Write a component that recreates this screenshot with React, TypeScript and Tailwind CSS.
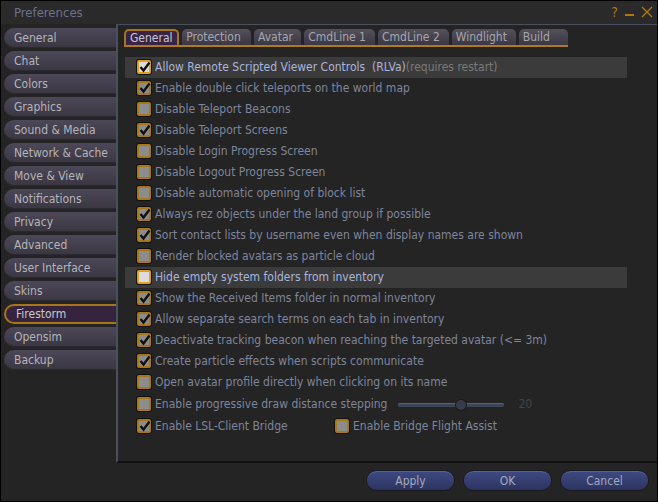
import React from "react";

const font = { fontFamily: '"DejaVu Sans Condensed", "DejaVu Sans", sans-serif' };

const sideTabs = [
        "General",
        "Chat",
        "Colors",
        "Graphics",
        "Sound & Media",
        "Network & Cache",
        "Move & View",
        "Notifications",
        "Privacy",
        "Advanced",
        "User Interface",
        "Skins",
        "Firestorm",
        "Opensim",
        "Backup",
];

const topTabs = [
        { label: "General", w: "w-[56px]" },
        { label: "Protection", w: "w-[70px]" },
        { label: "Avatar", w: "w-[48px]" },
        { label: "CmdLine 1", w: "w-[72px]" },
        { label: "CmdLine 2", w: "w-[72px]" },
        { label: "Windlight", w: "w-[65px]" },
        { label: "Build", w: "w-[50px]" },
];

type Opt = { label: string; checked: boolean; hl?: boolean };

const options: Opt[] = [
        { label: "Allow Remote Scripted Viewer Controls  (RLVa)", checked: true, hl: true },
        { label: "Enable double click teleports on the world map", checked: true },
        { label: "Disable Teleport Beacons", checked: false },
        { label: "Disable Teleport Screens", checked: true },
        { label: "Disable Login Progress Screen", checked: false },
        { label: "Disable Logout Progress Screen", checked: false },
        { label: "Disable automatic opening of block list", checked: false },
        { label: "Always rez objects under the land group if possible", checked: true },
        { label: "Sort contact lists by username even when display names are shown", checked: true },
        { label: "Render blocked avatars as particle cloud", checked: false },
        { label: "Hide empty system folders from inventory", checked: false, hl: true },
        { label: "Show the Received Items folder in normal inventory", checked: true },
        { label: "Allow separate search terms on each tab in inventory", checked: true },
        { label: "Deactivate tracking beacon when reaching the targeted avatar (<= 3m)", checked: true },
        { label: "Create particle effects when scripts communicate", checked: true },
        { label: "Open avatar profile directly when clicking on its name", checked: false },
];

const Check = ({ checked, hl }: { checked: boolean; hl?: boolean }) => (
        <span
                className={`relative flex h-[14px] w-[14px] shrink-0 items-center justify-center rounded-[2px] border-2 ${
                        hl ? "border-[#e0a020] bg-[#dcdcdc]" : "border-[#a87818] bg-[#8c8c8c]"
                } shadow-[0_0_0_1px_#111]`}
        >
                {checked && (
                        <svg width="12" height="12" viewBox="0 0 12 12" className="absolute -top-[1px] left-[0px]">
                                <path d="M1.5 6 L4.5 9.5 L10.5 1.5" fill="none" stroke="#111" strokeWidth="2.4" />
                        </svg>
                )}
        </span>
);

const Row = ({ o, h = "h-[21px]" }: { o: Opt; h?: string }) => (
        <div className={`flex ${h} items-center pl-[12px] ${o.hl ? "bg-[#3b3b3b]" : ""}`}>
                <Check checked={o.checked} hl={o.hl} />
                <span
                        className={`ml-[4px] whitespace-pre text-[12px] ${o.hl ? "text-[#aab4dc]" : "text-[#7e859d]"}`}
                >
                        {o.label}
                        {o.hl && o.label.includes("RLVa") && (
                                <span className="text-[#7a7a7a]">(requires restart)</span>
                        )}
                </span>
        </div>
);

export default function App() {
        return (
                <div
                        style={font}
                        className="flex h-[502px] w-[658px] flex-col overflow-hidden border border-black bg-[#242424]"
                >
                        {/* title bar */}
                        <div className="flex h-[23px] items-center bg-[#2a2a2a] pl-[13px] pr-[4px]">
                                <span className="text-[13px] text-[#6a7290]">Preferences</span>
                                <div className="ml-auto flex items-center gap-[7px] text-[14px] text-[#b07812]">
                                        <span>?</span>
                                        <span className="mt-[6px] h-[2px] w-[9px] bg-[#b07812]" />
                                        <svg width="12" height="12" viewBox="0 0 12 12">
                                                <path d="M1 1 L11 11 M11 1 L1 11" stroke="#b07812" strokeWidth="1.4" />
                                        </svg>
                                </div>
                        </div>

                        <div className="flex flex-1">
                                {/* sidebar */}
                                <div className="flex w-[115px] shrink-0 flex-col gap-[3px] pl-[3px] pt-[4px]">
                                        {sideTabs.map((t) => {
                                                const sel = t === "Firestorm";
                                                return (
                                                        <div
                                                                key={t}
                                                                className={`flex h-[20px] items-center rounded-l-[10px] pl-[10px] text-[12px] ${
                                                                        sel
                                                                                ? "border-2 border-r-0 border-[#a8741c] bg-[#36243f] pl-[8px] text-[#c8c8d0]"
                                                                                : "bg-gradient-to-b from-[#4d4857] to-[#3a3641] text-[#b4b4bc] shadow-[inset_0_-1px_0_#2a2830]"
                                                                }`}
                                                        >
                                                                {t}
                                                        </div>
                                                );
                                        })}
                                </div>

                                {/* panel */}
                                <div className="flex h-[439px] flex-1 flex-col border-l-2 border-t border-b-2 border-l-[#48505f] border-t-[#48505f] border-b-[#111] bg-[#242424]">
                                        <div className="ml-[6px] mt-[4px] flex w-[444px] gap-[3px] border-b-2 border-[#b07a20]">
                                                {topTabs.map((t) => {
                                                        const sel = t.label === "General";
                                                        return (
                                                                <div
                                                                        key={t.label}
                                                                        className={`flex h-[16px] ${t.w} items-center rounded-t-[5px] pl-[4px] text-[12px] ${
                                                                                sel
                                                                                        ? "border-2 border-b-0 border-[#a8741c] bg-[#3a2446] pl-[2px] text-[#c8c8d0]"
                                                                                        : "bg-gradient-to-b from-[#54505c] to-[#3c3842] text-[#a6a6ae]"
                                                                        }`}
                                                                >
                                                                        {t.label}
                                                                </div>
                                                        );
                                                })}
                                        </div>

                                        <div className="ml-[7px] mt-[10px] flex w-[502px] flex-col">
                                                {options.map((o) => (
                                                        <Row key={o.label} o={o} />
                                                ))}
                                                <div className="flex h-[22px] items-center pl-[12px]">
                                                        <Check checked={false} />
                                                        <span className="ml-[4px] text-[12px] text-[#7e859d]">
                                                                Enable progressive draw distance stepping
                                                        </span>
                                                        <div className="relative ml-[11px] mt-[2px] h-[4px] w-[106px] rounded-full bg-[#3c4458] shadow-[inset_0_1px_0_#5a6274]">
                                                                <span className="absolute -top-[3px] left-[58px] h-[10px] w-[10px] rounded-full bg-[#383c48] shadow-[0_0_0_1px_#1a1a1a]" />
                                                        </div>
                                                        <span className="ml-[14px] text-[12px] text-[#3f4450]">20</span>
                                                </div>
                                                <div className="flex h-[22px] items-center pl-[12px]">
                                                        <Check checked={true} />
                                                        <span className="ml-[4px] w-[180px] text-[12px] text-[#7e859d]">
                                                                Enable LSL-Client Bridge
                                                        </span>
                                                        <Check checked={false} />
                                                        <span className="ml-[4px] text-[12px] text-[#7e859d]">
                                                                Enable Bridge Flight Assist
                                                        </span>
                                                </div>
                                        </div>
                                </div>
                        </div>

                        {/* buttons */}
                        <div className="flex h-[39px] items-center justify-end gap-[8px] pb-[2px] pr-[8px]">
                                {["Apply", "OK", "Cancel"].map((b) => (
                                        <div
                                                key={b}
                                                className="flex h-[21px] w-[89px] items-center justify-center rounded-full border border-[#1a1a22] bg-gradient-to-b from-[#3e4a82] to-[#2c3460] text-[12px] text-[#a4a8bc] shadow-[inset_0_1px_0_#56629a]"
                                        >
                                                {b}
                                        </div>
                                ))}
                        </div>
                </div>
        );
}
